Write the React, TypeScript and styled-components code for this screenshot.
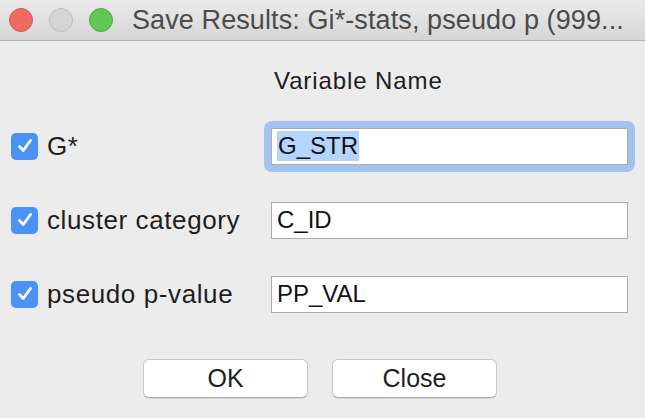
import React from 'react';
import styled, { createGlobalStyle } from 'styled-components';

const GlobalStyle = createGlobalStyle`
  html, body {
    margin: 0;
    padding: 0;
    background: #ececec;
  }
  body {
    font-family: "Liberation Sans", Arial, sans-serif;
  }
`;

const Window = styled.div`
  width: 645px;
  height: 418px;
  background: #ececec;
  display: flex;
  flex-direction: column;
  overflow: hidden;
`;

const TitleBar = styled.div`
  height: 40px;
  flex-shrink: 0;
  display: flex;
  align-items: center;
  padding-left: 9px;
  background: linear-gradient(#ebebeb, #d5d5d5);
  border-bottom: 1px solid #b1b1b1;
`;

const Lights = styled.div`
  display: flex;
  gap: 16px;
  margin-right: 19px;
`;

const lightColors = {
  close: ['#ef6b5f', '#d6574d'],
  minimize: ['#d5d5d5', '#bcbcbc'],
  zoom: ['#62c655', '#4fa843'],
} as const;

const Light = styled.span<{ $kind: keyof typeof lightColors }>`
  width: 22px;
  height: 22px;
  border-radius: 50%;
  background: ${p => lightColors[p.$kind][0]};
  border: 1px solid ${p => lightColors[p.$kind][1]};
`;

const Title = styled.div`
  font-size: 27px;
  letter-spacing: 0.1px;
  color: #4b4b4b;
  white-space: nowrap;
`;

const Body = styled.div`
  padding: 25px 0 0 11px;
  display: flex;
  flex-direction: column;
`;

const Form = styled.div`
  display: grid;
  grid-template-columns: 260px 357px;
  grid-template-rows: 43px repeat(3, 74px);
  align-items: center;
`;

const Header = styled.div`
  grid-column: 2;
  align-self: start;
  height: 30px;
  line-height: 30px;
  padding-left: 3px;
  font-size: 24px;
  letter-spacing: 0.9px;
  color: #1e1e1e;
`;

const CheckLabel = styled.label`
  display: flex;
  align-items: center;
  gap: 9px;
  font-size: 26px;
  letter-spacing: 0.6px;
  color: #1e1e1e;
`;

const Box = styled.span`
  width: 27px;
  height: 27px;
  border-radius: 5px;
  background: #4a92f6;
  display: flex;
  align-items: center;
  justify-content: center;
  flex-shrink: 0;
`;

const FieldWrap = styled.div<{ $focused?: boolean }>`
  padding: 7px;
  margin: -7px;
  border-radius: 8px;
  background: ${p => (p.$focused ? '#a2c3ee' : 'transparent')};
`;

const Field = styled.div`
  height: 35px;
  border: 1px solid #aaaaaa;
  background: #ffffff;
  display: flex;
  align-items: center;
  padding-left: 5px;
  font-size: 24px;
  color: #111;
`;

const Selected = styled.span`
  background: #b3d4fc;
  line-height: 30px;
  padding: 0 1px;
`;

const Buttons = styled.div`
  display: flex;
  justify-content: center;
  gap: 24px;
  margin-top: 28px;
  padding-right: 16px;
`;

const Button = styled.button`
  width: 165px;
  height: 39px;
  background: #ffffff;
  border: 1px solid #c6c6c6;
  border-bottom-color: #a9a9a9;
  border-radius: 6px;
  box-shadow: 0 1px 1px rgba(0, 0, 0, 0.08);
  font-family: "Liberation Sans", Arial, sans-serif;
  font-size: 25px;
  color: #1e1e1e;
  padding: 0;
`;

const Check = () => (
  <Box>
    <svg width="18" height="18" viewBox="0 0 18 18">
      <path d="M3.5 9.5 L7.3 13.5 L14.5 3.5" fill="none" stroke="#fff" strokeWidth="2.8" strokeLinecap="round" strokeLinejoin="round" />
    </svg>
  </Box>
);

const rows = [
  { label: 'G*', value: 'G_STR', focused: true },
  { label: 'cluster category', value: 'C_ID' },
  { label: 'pseudo p-value', value: 'PP_VAL' },
];

export default function App() {
  return (
    <Window>
      <GlobalStyle />
      <TitleBar>
        <Lights>
          <Light $kind="close" />
          <Light $kind="minimize" />
          <Light $kind="zoom" />
        </Lights>
        <Title>Save Results: Gi*-stats, pseudo p (999...</Title>
      </TitleBar>
      <Body>
        <Form>
          <Header>Variable Name</Header>
          {rows.map(r => (
            <React.Fragment key={r.value}>
              <CheckLabel>
                <Check />
                {r.label}
              </CheckLabel>
              <FieldWrap $focused={r.focused}>
                <Field>{r.focused ? <Selected>{r.value}</Selected> : r.value}</Field>
              </FieldWrap>
            </React.Fragment>
          ))}
        </Form>
        <Buttons>
          <Button>OK</Button>
          <Button>Close</Button>
        </Buttons>
      </Body>
    </Window>
  );
}
